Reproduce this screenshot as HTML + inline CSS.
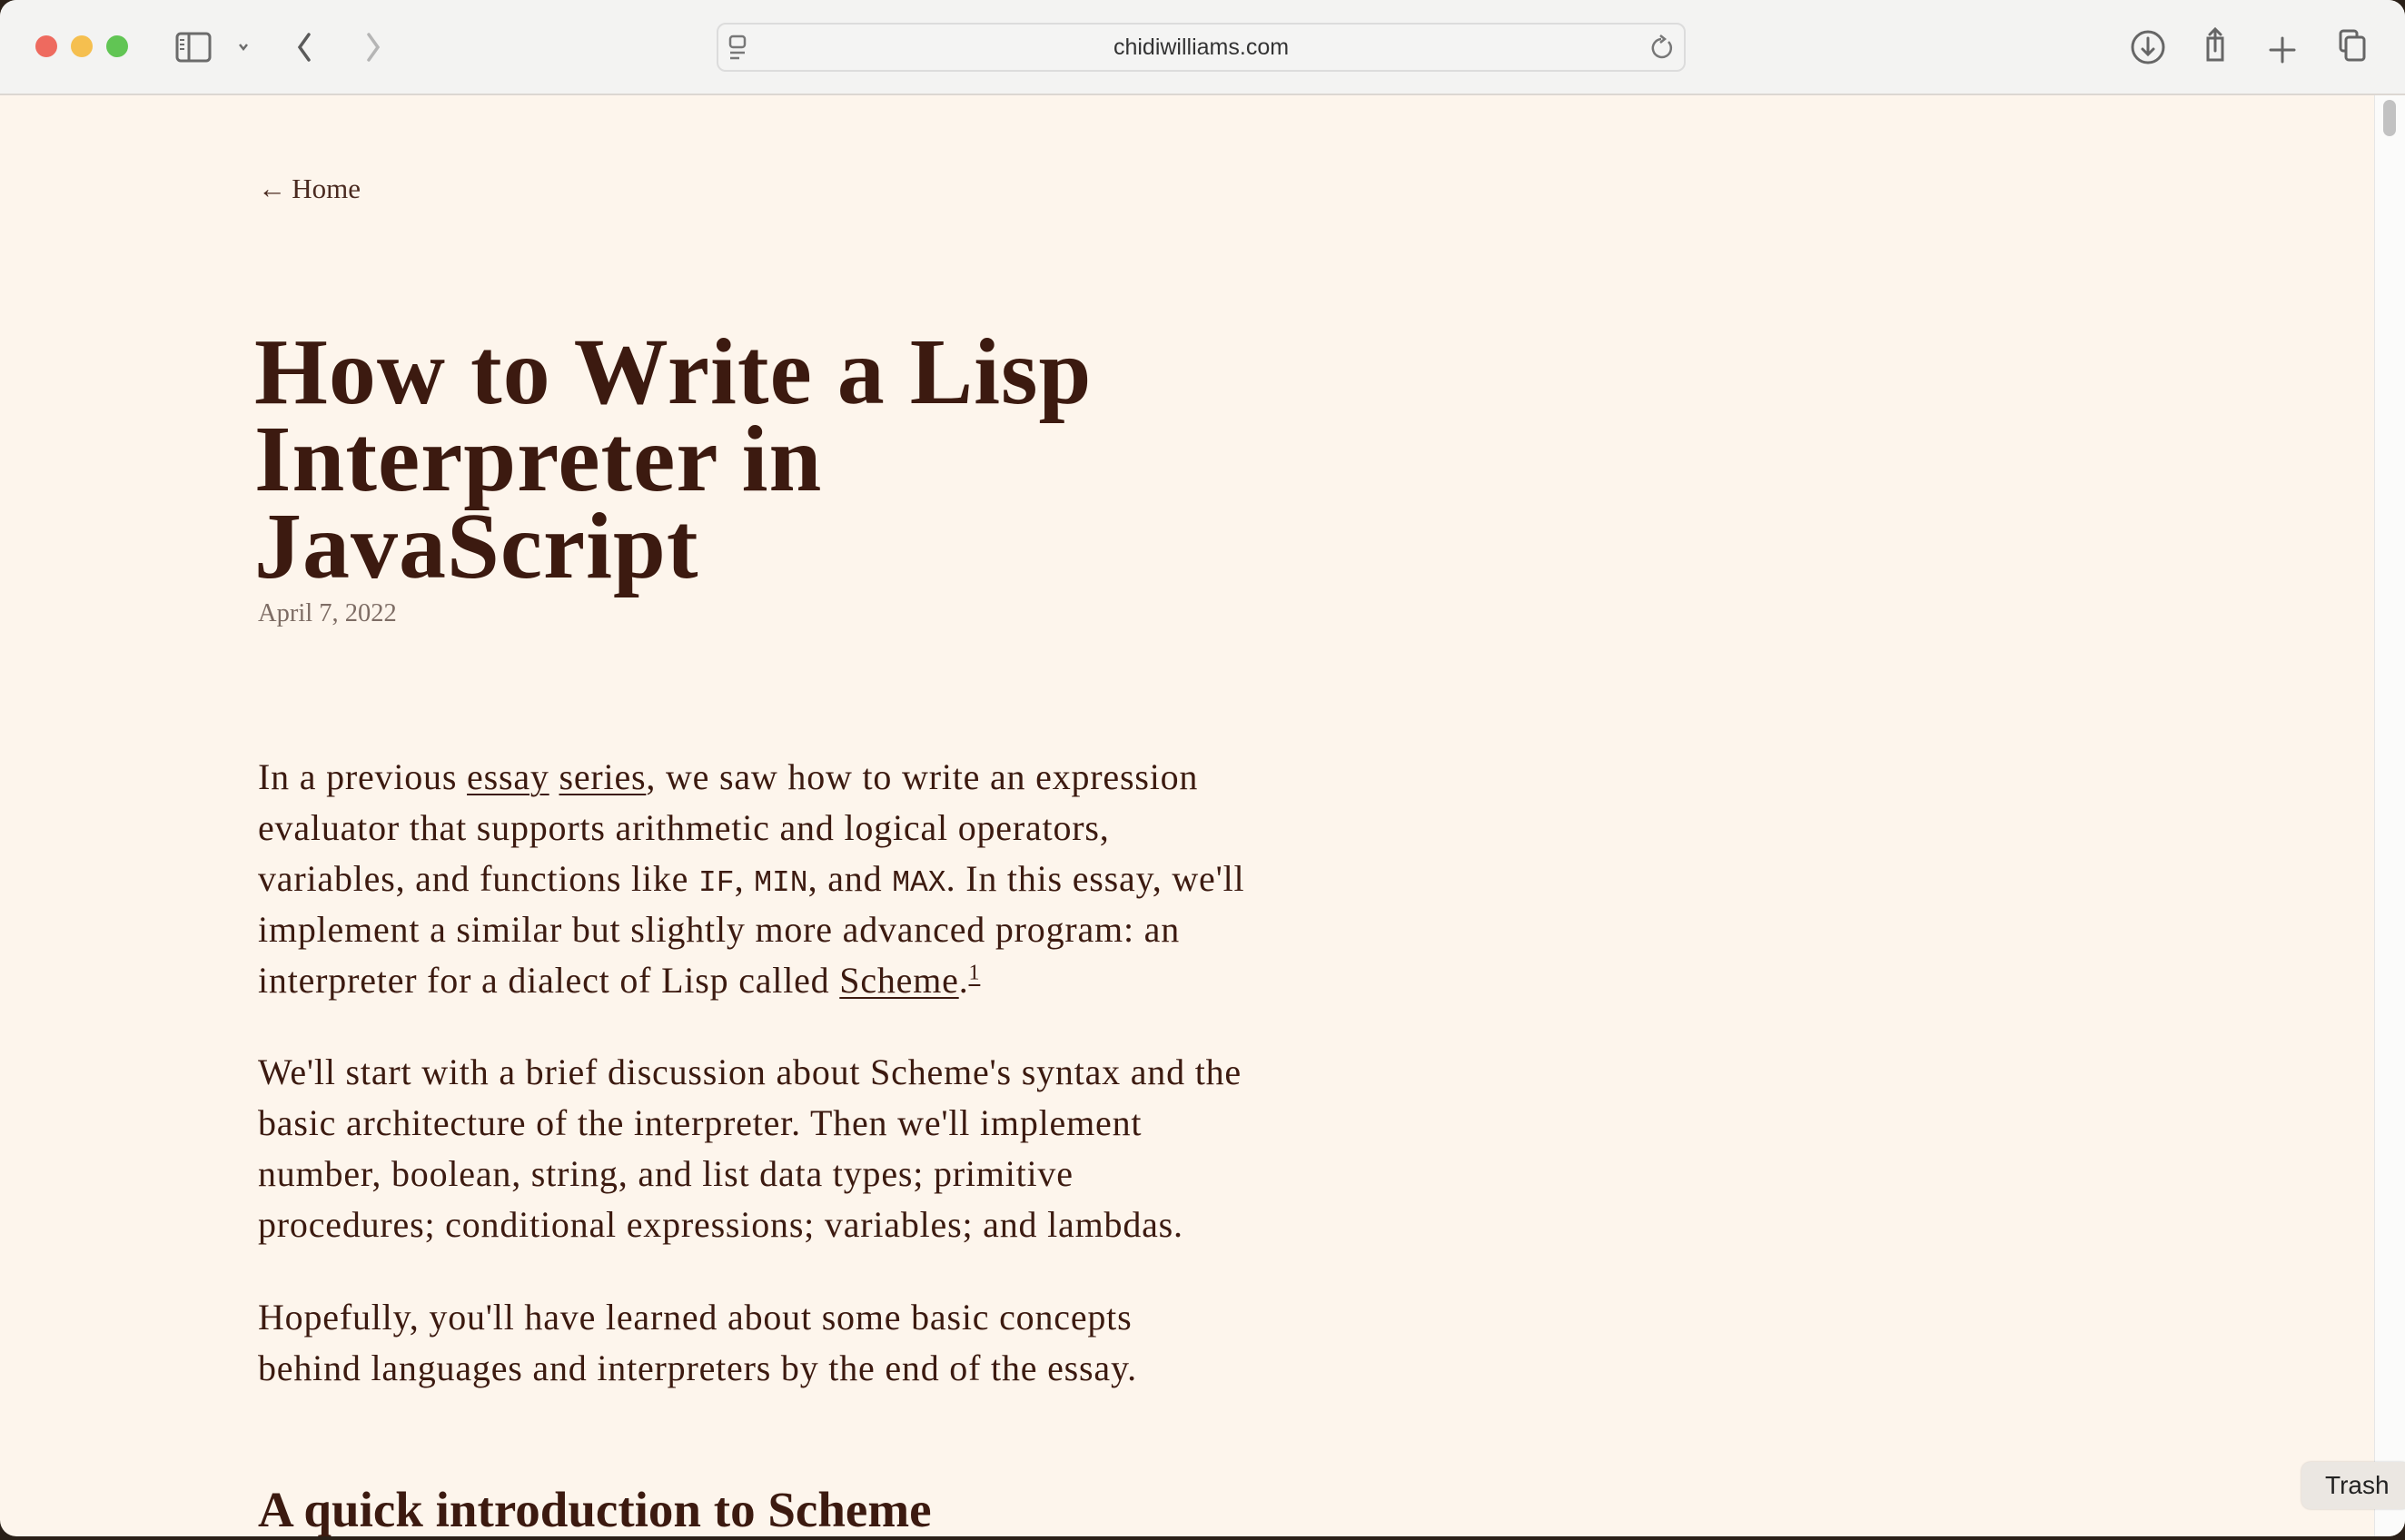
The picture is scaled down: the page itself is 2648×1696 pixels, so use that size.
<!DOCTYPE html>
<html><head><meta charset="utf-8"><style>
*{margin:0;padding:0;box-sizing:border-box}
body{width:2648px;height:1696px;overflow:hidden;background:#2a2018;font-family:"Liberation Serif",serif;position:relative}
.win{position:absolute;left:0;top:0;width:2648px;height:1692px;border-radius:18px;overflow:hidden;background:#fdf5ec}
.bar{position:absolute;left:0;top:0;width:2648px;height:105px;background:#f3f3f2;border-bottom:2px solid #dcd7d2}
.tl{position:absolute;top:39px;width:24px;height:24px;border-radius:50%}
.url{position:absolute;left:789px;top:25px;width:1067px;height:54px;border:2px solid #dcdcdc;border-radius:10px;background:#f4f4f3;font-family:"Liberation Sans",sans-serif;font-size:25px;color:#333;text-align:center;line-height:50px}
.c{color:#3c1a10;position:absolute;left:284px}
.home{top:190px;font-size:31px;color:#4a2a20}
h1{position:absolute;left:280px;top:362px;font-size:104px;line-height:96px;font-weight:bold;color:#3c1a10;letter-spacing:1px}
.date{top:660px;font-size:28.5px;color:#7d6c64}
p{position:absolute;left:284px;font-size:40px;line-height:56px;color:#3c1a10;white-space:nowrap;letter-spacing:0.8px}
code{font-family:"Liberation Mono",monospace;font-size:33px;line-height:0;letter-spacing:0}
sup{line-height:0;font-size:24px}
a{color:#3c1a10;text-decoration:underline;text-underline-offset:5px;text-decoration-thickness:2px}
h2{position:absolute;left:284px;top:1631px;font-size:55px;font-weight:bold;color:#3c1a10}
.sb{position:absolute;left:2614px;top:105px;width:34px;height:1590px;background:#fbfbfa;border-left:1px solid #e6e6e6}
.thumb{position:absolute;left:2624px;top:110px;width:14px;height:40px;border-radius:7px;background:#c2c2c2}
.tip{position:absolute;left:2534px;top:1610px;width:120px;height:52px;background:#ebe7e2;border-radius:10px;font-family:"Liberation Sans",sans-serif;font-size:28px;color:#222;padding:10px 0 0 26px;box-shadow:0 0 2px rgba(0,0,0,.2)}
</style></head><body>
<div class="win">
<div class="bar">
<div class="tl" style="left:39px;background:#ee6a5f"></div>
<div class="tl" style="left:78px;background:#f5bf4f"></div>
<div class="tl" style="left:117px;background:#61c554"></div>
<svg style="position:absolute;left:190px;top:34px" width="120" height="36" viewBox="0 0 120 36" fill="none" stroke="#6b6b6b" stroke-width="3">
<rect x="5" y="3" width="36" height="30" rx="4"/><line x1="18" y1="3" x2="18" y2="33"/><path d="M8 10h5M8 15h5M8 20h5" stroke-width="2"/>
<path d="M74 15l4 5 4-5" stroke-width="2.5"/></svg>
<svg style="position:absolute;left:322px;top:32px" width="100" height="40" viewBox="0 0 100 40" fill="none" stroke-width="3.5" stroke-linecap="round">
<path d="M18 6L8 20l10 14" stroke="#5a5a5a"/><path d="M84 6l10 14-10 14" stroke="#b5b5b5"/></svg>
<div class="url">chidiwilliams.com</div>
<svg style="position:absolute;left:800px;top:37px" width="30" height="32" viewBox="0 0 30 32" fill="none" stroke="#777" stroke-width="2.5"><rect x="4" y="3" width="16" height="12" rx="3"/><path d="M4 21h16M4 27h10"/></svg>
<svg style="position:absolute;left:1815px;top:36px" width="32" height="34" viewBox="0 0 32 34" fill="none" stroke="#777" stroke-width="2.5"><path d="M22 10a10 10 0 1 1-8-3"/><path d="M13 3l5 4-5 4"/></svg>
<svg style="position:absolute;left:2340px;top:28px" width="290" height="50" viewBox="0 0 290 50" fill="none" stroke="#666" stroke-width="3" stroke-linecap="round">
<circle cx="25" cy="24" r="17"/><path d="M25 14v18M19 26l6 6 6-6"/>
<path d="M99 14h-8v24h16V14h-8"/><path d="M99 4v24M93 10l6-6 6 6"/>
<path d="M173 14v26M160 27h26"/>
<rect x="237" y="6" width="18" height="22" rx="3"/><rect x="243" y="13" width="20" height="25" rx="3" fill="#f3f3f2"/>
</svg>
</div>
<div class="c home">←&thinsp;Home</div>
<h1>How to Write a Lisp<br>Interpreter in<br>JavaScript</h1>
<div class="c date">April 7, 2022</div>
<p style="top:828px">In a previous <a>essay</a> <a>series</a>, we saw how to write an expression<br>evaluator that supports arithmetic and logical operators,<br>variables, and functions like <code>IF</code>, <code>MIN</code>, and <code>MAX</code>. In this essay, we'll<br>implement a similar but slightly more advanced program: an<br>interpreter for a dialect of Lisp called <a>Scheme</a>.<sup><a>1</a></sup></p>
<p style="top:1153px">We'll start with a brief discussion about Scheme's syntax and the<br>basic architecture of the interpreter. Then we'll implement<br>number, boolean, string, and list data types; primitive<br>procedures; conditional expressions; variables; and lambdas.</p>
<p style="top:1423px">Hopefully, you'll have learned about some basic concepts<br>behind languages and interpreters by the end of the essay.</p>
<h2>A quick introduction to Scheme</h2>
<div class="sb"></div><div class="thumb"></div>
<div class="tip">Trash</div>
</div>
</body></html>
